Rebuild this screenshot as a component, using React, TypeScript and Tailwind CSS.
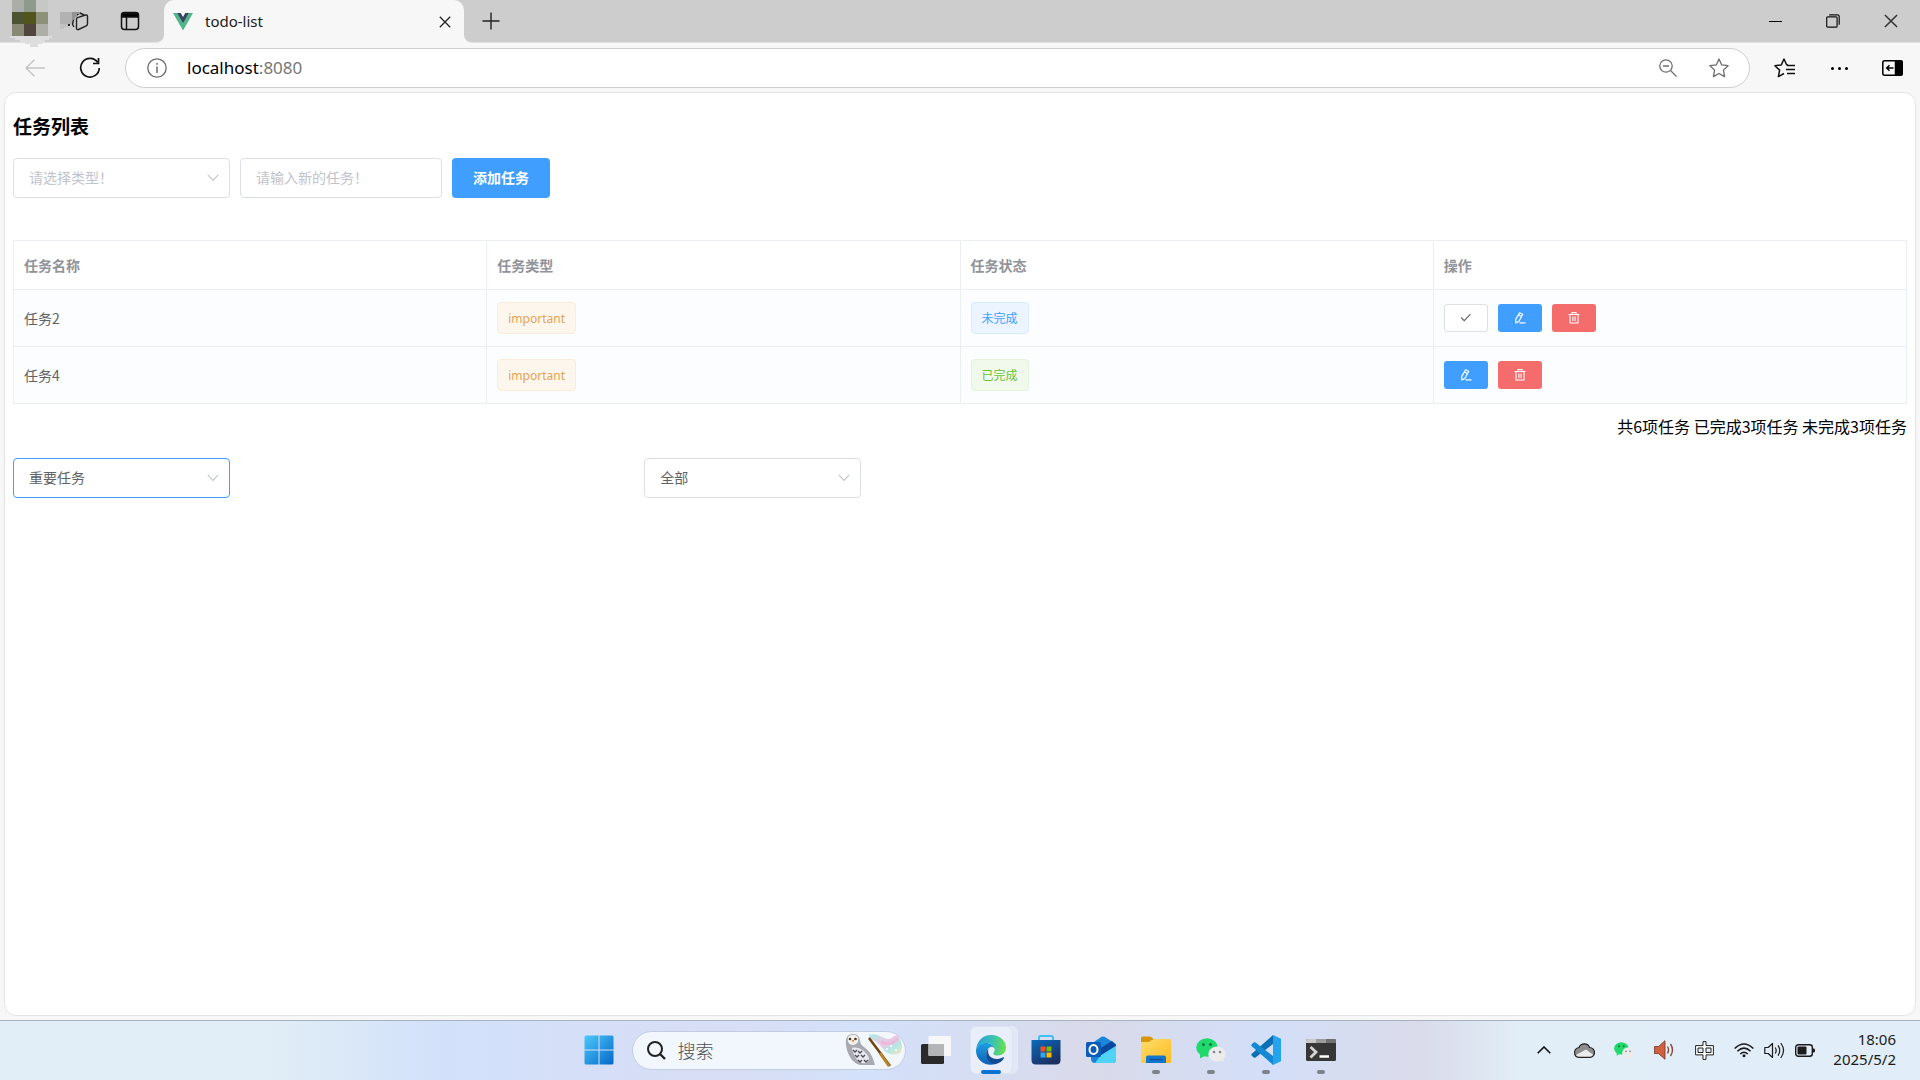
import { useState, type ReactNode } from "react";

type Task = {
  id: number;
  name: string;
  type: string;
  done: boolean;
};

const tasks: Task[] = [
  { id: 2, name: "任务2", type: "important", done: false },
  { id: 4, name: "任务4", type: "important", done: true },
];

/* ---------- browser icons ---------- */

const AvatarMosaic = () => (
  <svg width="84" height="48" viewBox="0 0 84 48" shapeRendering="crispEdges">
    <path d="M10 36h42v2h-3v2h-4v2h-3v2h-4v3h-8v-3h-5v-2h-5v-2h-5v-2h-5z" fill="#dedede" />
    <rect x="12" y="0" width="12" height="12" fill="#abaea8" />
    <rect x="24" y="0" width="12" height="12" fill="#8f998c" />
    <rect x="36" y="0" width="12" height="12" fill="#c6c8c5" />
    <rect x="12" y="12" width="12" height="12" fill="#4c5232" />
    <rect x="24" y="12" width="12" height="12" fill="#52541d" />
    <rect x="36" y="12" width="12" height="12" fill="#8f907a" />
    <rect x="12" y="24" width="12" height="12" fill="#8a8976" />
    <rect x="24" y="24" width="12" height="12" fill="#4f463f" />
    <rect x="36" y="24" width="12" height="12" fill="#aeaea8" />
    <rect x="60" y="12" width="12" height="12" fill="#b2b2b2" />
    <path d="M72 12h8v2h-3v3h-2v3h-3z" fill="#929292" />
    <path d="M60 24h8v3h-4v2h-4z" fill="#c0c0c0" />
  </svg>
);

const WorkspacesIcon = () => (
  <svg width="22" height="20" viewBox="0 0 22 20" fill="none" stroke="#222" strokeWidth="1.4" strokeLinejoin="round">
    <path d="M10.500 6.700 18.500 4q2-.5 2 1.200v7.600q0 1.500-1.200 2L11.500 18.500q-2 .6-2-1.200V8.200q0-1.100 1-1.500Z" />
    <path d="M7 16 5.500 13.500 7 6l6-4 4 2" />
    <path d="M1 14h2" strokeWidth="2" />
  </svg>
);

const TabActionsIcon = () => (
  <svg width="20" height="20" viewBox="0 0 20 20" fill="none" stroke="#111" strokeWidth="1.500">
    <rect x="1.500" y="1.500" width="17" height="17" rx="3" />
    <path d="M2 2.500h16V6H2z" fill="#000" />
    <path d="M6.500 6v12" />
  </svg>
);

const VueLogo = () => (
  <svg width="20" height="18" viewBox="0 0 20 18">
    <path d="M0 0h4l6 10.500L16 0h4L10 17.500z" fill="#4fb787" />
    <path d="M4 0h3.700L10 4l2.300-4H16l-6 10.500z" fill="#34495e" />
  </svg>
);

const CloseIcon = ({ size = 12, color = "#222" }: { size?: number; color?: string }) => (
  <svg width={size} height={size} viewBox="0 0 12 12" stroke={color} strokeWidth="1.300" fill="none">
    <path d="m.8.8 10.400 10.400M11.200.8.8 11.200" />
  </svg>
);

const PlusIcon = () => (
  <svg width="18" height="18" viewBox="0 0 18 18" stroke="#222" strokeWidth="1.400">
    <path d="M9 .5v17M.5 9h17" />
  </svg>
);

const RestoreIcon = () => (
  <svg width="14" height="14" viewBox="0 0 14 14" fill="none" stroke="#111" strokeWidth="1.200">
    <rect x=".7" y="2.800" width="10.400" height="10.400" rx="1" />
    <path d="M3.200.8h8.300q1.700 0 1.700 1.700v8.300" />
  </svg>
);

const BackIcon = () => (
  <svg width="20" height="18" viewBox="0 0 20 18" fill="none" stroke="#c4c4c4" strokeWidth="1.400">
    <path d="M20 9H1M9.500.7 1 9l8.500 8.300" />
  </svg>
);

const RefreshIcon = () => (
  <svg width="22" height="22" viewBox="0 0 22 22" fill="none" stroke="#111" strokeWidth="1.700">
    <path d="M18.700 5.500A9.300 9.300 0 1 0 20.300 11" />
    <path d="M19.500 1v5.500H14" />
  </svg>
);

const InfoIcon = () => (
  <svg width="20" height="20" viewBox="0 0 20 20" fill="none" stroke="#6b6b6b" strokeWidth="1.300">
    <circle cx="10" cy="10" r="9.200" />
    <path d="M10 8.500V15M10 5v1.800" strokeWidth="1.500" />
  </svg>
);

const ZoomOutIcon = () => (
  <svg width="18" height="18" viewBox="0 0 18 18" fill="none" stroke="#6f6f6f" strokeWidth="1.300">
    <circle cx="7" cy="7" r="6.200" />
    <path d="M4 7h6M11.500 11.500l6 6" />
  </svg>
);

const StarIcon = () => (
  <svg width="20" height="20" viewBox="0 0 20 20" fill="none" stroke="#6b6b6b" strokeWidth="1.300" strokeLinejoin="round">
    <path d="m10 1 2.700 5.900 6.400.8-4.700 4.400 1.200 6.500L10 15.500l-5.600 3.100 1.200-6.500L.9 7.700l6.400-.8z" />
  </svg>
);

const FavoritesIcon = () => (
  <svg width="21" height="20" viewBox="0 0 21 20" fill="none" stroke="#111" strokeWidth="1.500" strokeLinejoin="round">
    <path d="M14 6.900 12.600 6.700 10 1 7.300 6.900l-6.400.8 4.700 4.400-1.200 6.500L10 15.500" />
    <path d="M13 7.500h8M12 11.500h9M13 15.500h8" />
  </svg>
);

const SidebarIcon = () => (
  <svg width="21" height="16" viewBox="0 0 21 16" fill="none" stroke="#000" strokeWidth="1.500">
    <rect x=".8" y=".8" width="19.400" height="14.400" rx="2" />
    <path d="M13.500 1H19q1.200 0 1.200 1.200v11.600q0 1.200-1.200 1.200h-5.500z" fill="#000" />
    <path d="M11.500 8H5M7.500 5.300 4.700 8l2.800 2.700" />
  </svg>
);

/* ---------- page icons ---------- */

const ArrowDown = () => (
  <svg width="12" height="8" viewBox="0 0 12 8" fill="none" stroke="#c0c4cc" strokeWidth="1.100">
    <path d="m.8.9 5.200 5.500L11.200.9" />
  </svg>
);

const CheckIcon = () => (
  <svg width="12" height="12" viewBox="0 0 12 12" fill="none" stroke="#606266" strokeWidth="1.100">
    <path d="m1.200 5.500 3 3.200 6.300-6.500" />
  </svg>
);

const EditIcon = () => (
  <svg width="12" height="12" viewBox="0 0 12 12" fill="none" stroke="#fff" strokeWidth="1.200" strokeLinejoin="round">
    <path d="M5.600.8 8.700 2.200 5 9.200 2 11l-.4-3.400zM4.500 3l3.100 1.500" />
    <path d="M5.500 10.900h6" />
  </svg>
);

const DeleteIcon = () => (
  <svg width="12" height="12" viewBox="0 0 12 12" fill="none" stroke="#fff" strokeWidth="1.100">
    <path d="M.5 2.500h11M4 2.500v-2h4v2M2 2.500v8.500h8V2.500M4.900 4.500V9M7.100 4.500V9" />
  </svg>
);

/* ---------- taskbar icons ---------- */

const WindowsIcon = () => (
  <svg width="30" height="30" viewBox="0 0 30 30">
    <defs>
      <linearGradient id="win" x1="0" y1="0" x2="1" y2="1">
        <stop offset="0" stopColor="#4cc8fa" />
        <stop offset="1" stopColor="#0568c8" />
      </linearGradient>
    </defs>
    <path d="M2 .5h12.500v14H.5V2Q.5.5 2 .5M15.500.5H28Q29.500.5 29.500 2v12.500h-14zM.5 15.500h14v14H2Q.5 29.500.5 28zM15.500 15.500h14V28q0 1.500-1.500 1.500H15.500z" fill="url(#win)" />
  </svg>
);

const OwlWand = () => (
  <svg width="60" height="34" viewBox="0 0 60 34">
    <defs>
      <linearGradient id="spark" x1="0" y1="0" x2="1" y2="1">
        <stop offset="0" stopColor="#a5efe6" />
        <stop offset=".45" stopColor="#f1c4e6" />
        <stop offset=".7" stopColor="#b4e7e6" />
        <stop offset="1" stopColor="#efe9b4" />
      </linearGradient>
    </defs>
    <path d="M25 2c8-3 14 4 19 4 6 0 5-5 11-3 2 5 4 10 2 16-4 4-12 3-16-1-5-6-9-11-16-12z" fill="url(#spark)" />
    <path d="M37 9c6 3 11 2 17-3" stroke="#f5a7cf" strokeWidth="3" fill="none" opacity=".5" />
    <path d="M25 5 46 33" stroke="#70430f" strokeWidth="2.500" />
    <path d="m36 20 9 13" stroke="#b88425" strokeWidth="3" />
    <path d="M3 4C5 0 13 0 15 4c2 5 0 6 5 10 7 5 9 11 11 18H18C10 32 5 24 3 17c-1-5-2-9 0-13z" fill="#a9a9b1" />
    <path d="M4 4c3-3 7-3 10 0 1 4 0 7-5 8-4 0-6-3-5-8z" fill="#f3f1ee" />
    <path d="M8 15c6-2 14 3 17 10 0 5-4 6-7 5-5-2-9-8-10-15z" fill="#e8e8ee" />
    <path d="m9 17 2 2 2-2M14 18l2 2 2-2M11 22l2 2 2-2M17 22l2 2 2-2M14 27l2 2 2-2M20 27l2 2 2-2" stroke="#4d4d5c" strokeWidth="1.300" fill="none" />
    <circle cx="6" cy="6" r="1.300" fill="#4a3413" />
    <circle cx="11.500" cy="6" r="1.300" fill="#4a3413" />
    <path d="M8 7h2l-1 3z" fill="#b67b2d" />
    <circle cx="47" cy="13" r="1" fill="#fff" />
    <circle cx="52" cy="17" r="1" fill="#fff" />
    <circle cx="43" cy="16" r="1" fill="#fff" />
  </svg>
);

const TaskViewIcon = () => (
  <svg width="30" height="28" viewBox="0 0 30 28">
    <rect x="0" y="8" width="23" height="20" rx="1.500" fill="#2a2a2a" />
    <rect x="7.500" y="0" width="22.500" height="20" rx="1" fill="#f7f7f7" />
    <path d="M7.500 8H23v12H8.500q-1 0-1-1z" fill="#b4b5b6" />
  </svg>
);

const EdgeIcon = () => (
  <svg width="30" height="30" viewBox="0 0 30 30">
    <defs>
      <linearGradient id="edgeTop" x1="0" y1=".4" x2="1" y2=".5">
        <stop offset="0" stopColor="#2a9fd8" />
        <stop offset=".5" stopColor="#35c0b8" />
        <stop offset="1" stopColor="#6be04a" />
      </linearGradient>
      <linearGradient id="edgeLeft" x1="0" y1="0" x2="0" y2="1">
        <stop offset="0" stopColor="#1b9fe0" />
        <stop offset="1" stopColor="#0f60b8" />
      </linearGradient>
    </defs>
    <path d="M.2 14C1 6 7 0 15 0c9 0 15 6 15 12.500 0 5-3.500 8-8.500 8-3.500 0-4.500-1.500-4-2.500 1-1.500 1.500-2.500 1-4.500C17.500 10 14 8 10 8 5.500 8 1.500 10.500.2 14z" fill="url(#edgeTop)" />
    <path d="M.2 14C2 9.500 6 8 10 8c4.500 0 8 2.500 8.500 5.500-1-1.500-2.500-2-4-1.500C10 13.500 9 20 12.500 24.500c2 2.700 5 4.300 7 4.500C10 32 0 25.500 0 16z" fill="url(#edgeLeft)" />
    <path d="M12.600 13.500C8 17 10 28 19 29.200c4.500-.7 7.500-3.200 8.800-5.700.4-1-.3-1.500-1.200-1-6.600 3.500-14.500.5-14.500-6 0-1.200 0-2 .5-3z" fill="#124b92" />
  </svg>
);

const StoreIcon = () => (
  <svg width="30" height="30" viewBox="0 0 30 30">
    <defs>
      <linearGradient id="store" x1="0" y1="0" x2=".6" y2="1">
        <stop offset="0" stopColor="#0a6bbd" />
        <stop offset="1" stopColor="#1b2f63" />
      </linearGradient>
    </defs>
    <path d="M8 6V2.500Q8 1 9.500 1h11Q22 1 22 2.500V6" fill="none" stroke="#3fc1f5" strokeWidth="2" />
    <path d="M.5 5h29v20q0 4.500-4.500 4.500H5Q.5 29.500.5 25z" fill="url(#store)" />
    <rect x="9.500" y="11.500" width="5" height="5" fill="#f25022" />
    <rect x="15.500" y="11.500" width="5" height="5" fill="#7fba00" />
    <rect x="9.500" y="17.500" width="5" height="5" fill="#30a8ee" />
    <rect x="15.500" y="17.500" width="5" height="5" fill="#ffb900" />
  </svg>
);

const OutlookIcon = () => (
  <svg width="30" height="28" viewBox="0 0 30 28">
    <path d="M5 8 15.500.8Q17 0 18.500.8L30 8v16q0 3-3 3H9q-4 0-4-4z" fill="#1b86d8" />
    <path d="m15 19 15-9v14q0 3-3 3H9z" fill="#4fd3f7" />
    <path d="m13 13 13-8 4 4.500L15 19z" fill="#0a489c" />
    <rect x="0" y="6" width="15" height="15" rx="1.500" fill="#0b5cb8" />
    <ellipse cx="7.500" cy="13.500" rx="4" ry="4.500" fill="none" stroke="#fff" strokeWidth="2" />
  </svg>
);

const FolderIcon = () => (
  <svg width="30" height="28" viewBox="0 0 30 28">
    <defs>
      <linearGradient id="folder" x1="0" y1="0" x2="1" y2="1">
        <stop offset="0" stopColor="#ffdc6e" />
        <stop offset="1" stopColor="#fbbc1f" />
      </linearGradient>
    </defs>
    <path d="M0 2Q0 .5 1.500.5H9q1.500 0 2.500 1.500l1.500 2H0z" fill="#d8960c" />
    <path d="M0 8V5.500h8L13 3h15.500Q30 3 30 4.500V26q0 1-1 1H1q-1 0-1-1z" fill="url(#folder)" />
    <path d="M0 2v4h8l4-3z" fill="#d8960c" />
    <path d="M5 27v-5.500Q5 19.500 7 19.500h16q2 0 2 2V27z" fill="#1276cc" />
    <path d="M8.500 23.500h13" stroke="#0a4e96" strokeWidth="1.200" />
  </svg>
);

const WechatIcon = ({ size = 30 }: { size?: number }) => (
  <svg width={size} height={size * 0.8} viewBox="0 0 30 24">
    <ellipse cx="11" cy="9.500" rx="10.800" ry="9.300" fill="#1fd96c" />
    <path d="M4 16v4.500L8.500 18z" fill="#1fd96c" />
    <circle cx="7.500" cy="6.500" r="1.500" fill="#14743c" />
    <circle cx="14.500" cy="6.500" r="1.500" fill="#14743c" />
    <ellipse cx="21" cy="16" rx="8.700" ry="7.600" fill="#ececec" />
    <path d="m24 22 4 2-1-4z" fill="#ececec" />
    <circle cx="18" cy="14" r="1.300" fill="#85858a" />
    <circle cx="24" cy="14" r="1.300" fill="#85858a" />
  </svg>
);

const VscodeIcon = () => (
  <svg width="30" height="30" viewBox="0 0 30 30">
    <path d="M22 0 30 3.700v22.600L22 30z" fill="#25a4ee" />
    <path d="M22 0 .8 18.800q-1 1 0 2l1.900 1.700q.8.600 1.800 0L22 9z" fill="#0b6fb5" />
    <path d="M22 30 .8 11.200q-1-1 0-2l1.900-1.700q.8-.6 1.800 0L22 21z" fill="#1389d3" />
  </svg>
);

const TerminalIcon = () => (
  <svg width="30" height="22" viewBox="0 0 30 22">
    <rect width="30" height="22" rx="1.500" fill="#373737" />
    <path d="M0 4V1.500Q0 0 1.500 0H10v4z" fill="#c9c9c9" />
    <path d="M10 0h10v4H10z" fill="#9c9c9c" />
    <path d="M20 0h8.500Q30 0 30 1.500V4H20z" fill="#727272" />
    <path d="m4.500 8 5.500 5-5.500 5.500" fill="none" stroke="#d4d4d4" strokeWidth="2.800" />
    <path d="M13.500 17.500h9.500" stroke="#fff" strokeWidth="2.500" />
  </svg>
);

const SearchIcon = () => (
  <svg width="19" height="19" viewBox="0 0 19 19" fill="none" stroke="#222" strokeWidth="2">
    <circle cx="8" cy="8" r="7" />
    <path d="m13 13 5 5" strokeWidth="2.400" />
  </svg>
);

const ChevronUpIcon = () => (
  <svg width="14" height="8" viewBox="0 0 14 8" fill="none" stroke="#111" strokeWidth="1.600">
    <path d="m.7 7.300 6.300-6.300 6.300 6.300" />
  </svg>
);

const CloudIcon = () => (
  <svg width="21" height="15" viewBox="0 0 21 15">
    <path d="M5 4.500C7-.5 14-.3 15.500 4.500c3 0 5 2.500 5 5s-2 4.800-4.500 4.800H5C2 14.300.6 12 .6 9.500S2.500 5 5 4.500z" fill="#8d8d8d" />
    <path d="m2 12 10-5.500 7.500 5.500q-1.500 2-3.500 2H5q-2 0-3-2z" fill="#ececec" />
    <path d="M5 4.500C7-.5 14-.3 15.500 4.500c3 0 5 2.500 5 5s-2 4.800-4.500 4.800H5C2 14.300.6 12 .6 9.500S2.500 5 5 4.500z" fill="none" stroke="#222" strokeWidth="1.200" />
  </svg>
);

const SpeakerRedIcon = () => (
  <svg width="20" height="20" viewBox="0 0 20 20">
    <path d="M.5 6.500h4L11 .7v18.600L4.500 13.500h-4z" fill="#d2603f" stroke="#6c3324" strokeWidth=".8" />
    <path d="M13.500 6.500q2 3.500 0 7M16.500 4q4 6 0 12" fill="none" stroke="#8a4a3a" strokeWidth="1.400" />
  </svg>
);

// outlined input-method mark
const ImeIcon = () => (
  <svg width="19" height="19" viewBox="0 0 19 19" fill="#fff" stroke="#222" strokeWidth="1">
    <path d="M8 .6h3v4h7.400v9.300H11v4.500H8v-4.500H.6V4.600H8z" />
    <path d="M3 7h5v4.500H3zM11 7h5v4.500h-5z" fill="#e2edf8" />
  </svg>
);

const WifiIcon = () => (
  <svg width="20" height="15" viewBox="0 0 20 15" fill="none" stroke="#1b1b1b" strokeWidth="1.500">
    <path d="M.6 5.500Q10-3.600 19.400 5.500M3.400 8.300Q10 2 16.600 8.300M6.200 11Q10 7.500 13.800 11" />
    <circle cx="10" cy="12.800" r="1.500" fill="#1b1b1b" stroke="none" />
  </svg>
);

const VolumeIcon = () => (
  <svg width="21" height="17" viewBox="0 0 21 17" fill="none" stroke="#1b1b1b" strokeWidth="1.200" strokeLinejoin="round">
    <path d="M.8 5.500h3.400L8.500 1.500v14l-4.300-4H.8z" />
    <path d="M11.200 5.500q2 3 0 6M14 3.300q3.500 5.200 0 10.400M16.800 1q5.500 7.500 0 15" />
  </svg>
);

const BatteryIcon = () => (
  <svg width="20" height="13" viewBox="0 0 20 13">
    <rect x=".7" y=".7" width="16.600" height="11.600" rx="2.500" fill="none" stroke="#1b1b1b" strokeWidth="1.400" />
    <rect x="2.500" y="2.500" width="9" height="8" rx="1" fill="#1b1b1b" />
    <path d="M18 4.500h1q1 0 1 2t-1 2h-1z" fill="#1b1b1b" />
  </svg>
);

/* ---------- browser chrome ---------- */

const TabStrip = () => (
  <header className="flex h-[43px] bg-[#f7f7f7]">
    <div className="relative flex w-[164px] items-center rounded-br-lg border-b border-[#e2e2e2] bg-[#cdcdcd]">
      <button aria-label="工作区" className="ml-[67px]">
        <WorkspacesIcon />
      </button>
      <button aria-label="标签页操作" className="ml-[31px]">
        <TabActionsIcon />
      </button>
      <div className="absolute top-0 left-0 z-10">
        <AvatarMosaic />
      </div>
    </div>
    <div className="w-[300px] bg-[#cdcdcd]">
      <div className="flex h-full items-center rounded-t-[10px] bg-[#f7f7f7] pr-[11px] pl-[9px]">
        <VueLogo />
        <span className="ml-3 flex-1 pb-[2px] font-['Noto_Sans'] text-[15px] leading-5 text-[#1b1b1b]">todo-list</span>
        <button aria-label="关闭标签页" className="p-[2px]">
          <CloseIcon />
        </button>
      </div>
    </div>
    <div className="flex flex-1 items-center justify-between rounded-bl-lg border-b border-[#e2e2e2] bg-[#cdcdcd]">
      <button aria-label="新建标签页" className="ml-[18px]">
        <PlusIcon />
      </button>
      <div className="flex">
        <button aria-label="最小化" className="flex h-8 w-[58px] items-center justify-center">
          <span className="h-px w-[13px] bg-black" />
        </button>
        <button aria-label="还原" className="flex h-8 w-[58px] items-center justify-center">
          <RestoreIcon />
        </button>
        <button aria-label="关闭" className="flex h-8 w-[58px] items-center justify-center">
          <CloseIcon size={14} color="#333" />
        </button>
      </div>
    </div>
  </header>
);

const Toolbar = () => (
  <nav className="flex bg-[#f7f7f7] pt-[5px] pb-1">
    <button aria-label="返回" disabled className="ml-[25px] flex h-10 w-5 items-center">
      <BackIcon />
    </button>
    <button aria-label="刷新" className="ml-[34px] flex h-10 items-center">
      <RefreshIcon />
    </button>
    <div className="ml-6 flex h-10 flex-1 items-center rounded-full border border-[#cfcfcf] bg-white pr-5 pl-[21px]">
      <InfoIcon />
      <div className="ml-5 flex-1 font-['Noto_Sans'] text-[17px] leading-6 text-black">
        localhost<span className="text-[#767676]">:8080</span>
      </div>
      <button aria-label="缩小">
        <ZoomOutIcon />
      </button>
      <button aria-label="收藏此页" className="ml-8">
        <StarIcon />
      </button>
    </div>
    <button aria-label="收藏夹" className="ml-6 flex h-10 items-center">
      <FavoritesIcon />
    </button>
    <button aria-label="设置及其他" className="ml-9 flex h-10 w-[17px] items-center justify-between">
      <span className="size-[3px] rounded-full bg-black" />
      <span className="size-[3px] rounded-full bg-black" />
      <span className="size-[3px] rounded-full bg-black" />
    </button>
    <button aria-label="侧边栏" className="mr-[17px] ml-[34px] flex h-10 items-center">
      <SidebarIcon />
    </button>
  </nav>
);

/* ---------- todo page ---------- */

type SelectBoxProps = {
  label: string;
  options: string[];
  placeholder?: boolean;
  active?: boolean;
};

const SelectBox = ({ label, options, placeholder, active }: SelectBoxProps) => {
  const [value, setValue] = useState(options[0]);
  const isPlaceholder = placeholder && value === options[0];

  return (
    <div className="relative w-[217px]">
      <select
        aria-label={label}
        value={value}
        onChange={(e) => setValue(e.target.value)}
        className={`h-10 w-full appearance-none rounded border bg-white px-[15px] pb-[2px] text-sm outline-none ${
          active ? "border-[#409eff]" : "border-[#dcdfe6]"
        } ${isPlaceholder ? "text-[#bfc3cb]" : "text-[#606266]"}`}
      >
        {options.map((option) => (
          <option key={option}>{option}</option>
        ))}
      </select>
      <span className="pointer-events-none absolute inset-y-0 right-[11px] flex items-center">
        <ArrowDown />
      </span>
    </div>
  );
};

const Tag = ({ className, children }: { className: string; children: ReactNode }) => (
  <span className={`inline-flex h-8 items-center rounded border px-[10px] text-xs ${className}`}>{children}</span>
);

const TaskRow = ({ task }: { task: Task }) => (
  <tr className="h-[57px] bg-[#fbfdff]">
    <td className="border-r border-b border-[#ebeef5] px-[10px]">{task.name}</td>
    <td className="border-r border-b border-[#ebeef5] px-[10px]">
      <div className="flex">
        <Tag className="border-[#faecd8] bg-[#fdf6ec] pt-[2px] font-['Noto_Sans'] text-[#e0a458]">{task.type}</Tag>
      </div>
    </td>
    <td className="border-r border-b border-[#ebeef5] px-[10px]">
      <div className="flex">
        {task.done ? (
          <Tag className="border-[#e1f3d8] bg-[#f0f9eb] text-[#67c23a]">已完成</Tag>
        ) : (
          <Tag className="border-[#d9ecff] bg-[#ecf5ff] text-[#409eff]">未完成</Tag>
        )}
      </div>
    </td>
    <td className="border-r border-b border-[#ebeef5] px-[10px]">
      <div className="flex gap-[10px]">
        {!task.done && (
          <button
            aria-label="完成"
            className="flex h-7 w-11 items-center justify-center rounded-[3px] border border-[#dcdfe6] bg-white"
          >
            <CheckIcon />
          </button>
        )}
        <button aria-label="编辑" className="flex h-7 w-11 items-center justify-center rounded-[3px] bg-[#409eff]">
          <EditIcon />
        </button>
        <button aria-label="删除" className="flex h-7 w-11 items-center justify-center rounded-[3px] bg-[#f56c6c]">
          <DeleteIcon />
        </button>
      </div>
    </td>
  </tr>
);

const TodoPage = () => (
  <main className="mx-1 mb-1 flex-1 rounded-xl border border-[#e4e4e4] bg-white px-2 pt-[19px]">
    <h3 className="text-[19px] leading-7 font-bold text-black">任务列表</h3>

    <form className="mt-[18px] flex gap-[10px]" onSubmit={(e) => e.preventDefault()}>
      <SelectBox label="任务类型" options={["请选择类型！", "普通任务", "重要任务"]} placeholder />
      <input
        type="text"
        aria-label="新任务"
        placeholder="请输入新的任务！"
        className="h-10 w-[202px] rounded border border-[#dcdfe6] px-[15px] pb-[2px] text-sm text-[#606266] outline-none placeholder:text-[#bfc3cb]"
      />
      <button className="h-10 w-[98px] rounded bg-[#409eff] pb-[2px] text-sm font-bold text-white">添加任务</button>
    </form>

    <table className="mt-[42px] w-full table-fixed border-separate border-spacing-0 border-t border-l border-[#ebeef5] text-left text-sm text-[#606266]">
      <thead>
        <tr className="h-[49px] text-[#909399]">
          <th className="border-r border-b border-[#ebeef5] px-[10px] font-bold">任务名称</th>
          <th className="border-r border-b border-[#ebeef5] px-[10px] font-bold">任务类型</th>
          <th className="border-r border-b border-[#ebeef5] px-[10px] font-bold">任务状态</th>
          <th className="border-r border-b border-[#ebeef5] px-[10px] font-bold">操作</th>
        </tr>
      </thead>
      <tbody>
        {tasks.map((task) => (
          <TaskRow key={task.id} task={task} />
        ))}
      </tbody>
    </table>

    <p className="mt-[10px] text-right text-base leading-6 text-black">共6项任务 已完成3项任务 未完成3项任务</p>

    <div className="mt-5 grid grid-cols-3">
      <SelectBox label="按类型筛选" options={["重要任务", "普通任务", "全部"]} active />
      <SelectBox label="按状态筛选" options={["全部", "已完成", "未完成"]} />
    </div>
  </main>
);

/* ---------- taskbar ---------- */

type TaskbarAppProps = {
  label: string;
  children: ReactNode;
  running?: boolean;
};

const TaskbarApp = ({ label, children, running }: TaskbarAppProps) => (
  <button aria-label={label} className="relative flex h-full w-[55px] items-center justify-center">
    {children}
    {running && <span className="absolute bottom-[5px] h-1 w-2 rounded-full bg-[#7d828c]" />}
  </button>
);

const Taskbar = () => (
  <footer className="grid h-[60px] grid-cols-[1fr_auto_1fr] border-t border-[#a8b2bd] bg-[linear-gradient(90deg,#e1eef7_0%,#e1eef7_14%,#d2e1fa_23%,#d5dff8_30%,#d8def5_38%,#d3e1fa_45%,#d9daea_57%,#d3dff8_66%,#dadbea_74%,#e1edf7_79%,#e1edf8_100%)] pb-px">
    <div />
    <div className="flex h-full items-center">
      <TaskbarApp label="开始">
        <WindowsIcon />
      </TaskbarApp>
      <label className="mr-[3px] ml-[5px] flex h-[39px] w-[274px] items-center rounded-full border border-[#c3cce0] bg-[#f2f6fd] pr-px pl-[14px]">
        <SearchIcon />
        <input
          type="text"
          aria-label="搜索"
          placeholder="搜索"
          className="ml-3 w-0 flex-1 text-[18px] font-light outline-none placeholder:text-[#4c4f56]"
        />
        <OwlWand />
      </label>
      <TaskbarApp label="任务视图">
        <TaskViewIcon />
      </TaskbarApp>
      <button aria-label="Microsoft Edge" className="relative flex h-full w-[55px] items-center justify-center">
        <span className="absolute h-12 w-[43px] rounded-md border border-[#dfe4f2] bg-[#e9eefa] shadow-[5px_0_0_#e3e8f7]" />
        <span className="relative">
          <EdgeIcon />
        </span>
        <span className="absolute bottom-[5px] h-1 w-5 rounded-full bg-[#0873d0]" />
      </button>
      <TaskbarApp label="Microsoft Store">
        <StoreIcon />
      </TaskbarApp>
      <TaskbarApp label="Outlook">
        <OutlookIcon />
      </TaskbarApp>
      <TaskbarApp label="文件资源管理器" running>
        <FolderIcon />
      </TaskbarApp>
      <TaskbarApp label="微信" running>
        <WechatIcon />
      </TaskbarApp>
      <TaskbarApp label="Visual Studio Code" running>
        <VscodeIcon />
      </TaskbarApp>
      <TaskbarApp label="终端" running>
        <TerminalIcon />
      </TaskbarApp>
    </div>
    <div className="flex items-center justify-end pr-6">
      <div className="flex items-center">
        <button aria-label="显示隐藏的图标" className="flex w-10 justify-center">
          <ChevronUpIcon />
        </button>
        <button aria-label="OneDrive" className="flex w-10 justify-center">
          <CloudIcon />
        </button>
        <button aria-label="微信" className="flex w-10 justify-center">
          <WechatIcon size={20} />
        </button>
        <button aria-label="音频" className="flex w-10 justify-center">
          <SpeakerRedIcon />
        </button>
        <button aria-label="输入法" className="flex w-10 justify-center">
          <ImeIcon />
        </button>
      </div>
      <button aria-label="网络和电池" className="ml-[10px] flex items-center gap-[10px]">
        <WifiIcon />
        <VolumeIcon />
        <BatteryIcon />
      </button>
      <time className="ml-[18px] pb-[3px] text-right font-['Noto_Sans'] text-[15px] leading-5 text-[#1b1b1b]">
        18:06
        <br />
        2025/5/2
      </time>
    </div>
  </footer>
);

const App = () => (
  <div className="flex min-h-screen flex-col bg-[#f7f7f7] font-['Noto_Sans_CJK_SC','Noto_Sans',sans-serif]">
    <TabStrip />
    <Toolbar />
    <TodoPage />
    <Taskbar />
  </div>
);

export default App;
